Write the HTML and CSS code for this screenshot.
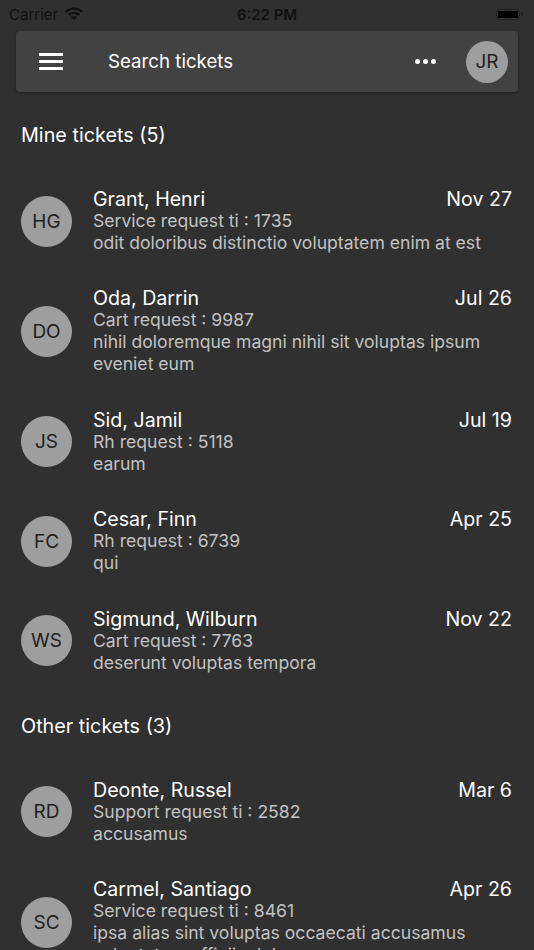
FILE: index.html
```html
<!DOCTYPE html>
<html lang="en">
<head>
  <meta charset="UTF-8" />
  <meta name="viewport" content="width=device-width, initial-scale=1" />
  <title>Tickets</title>
  <link rel="stylesheet" href="styles.css">
</head>
<body>

  <!-- iOS status bar -->
  <div class="status-bar">
    <div class="status-left">
      <span>Carrier</span>
      <svg class="wifi" width="20" height="14" viewBox="0 0 20 14">
        <path d="M10 13.5 L6.8 10.2 A4.6 4.6 0 0 1 13.2 10.2 Z" fill="#111"/>
        <path d="M4.6 8 A7.8 7.8 0 0 1 15.4 8" stroke="#111" stroke-width="2.2" fill="none"/>
        <path d="M1.6 5 A12 12 0 0 1 18.4 5" stroke="#111" stroke-width="2.2" fill="none"/>
      </svg>
    </div>
    <div class="status-time">6:22 PM</div>
    <div class="status-right">
      <div class="battery"><div class="battery-level"></div></div>
      <div class="battery-tip"></div>
    </div>
  </div>

  <!-- search bar -->
  <div class="search-bar">
    <div class="menu-icon">
      <span></span><span></span><span></span>
    </div>
    <div class="search-text">Search tickets</div>
    <div class="more-icon">
      <span></span><span></span><span></span>
    </div>
    <div class="avatar avatar-small">JR</div>
  </div>

  <h2 class="section-title">Mine tickets (5)</h2>
  <div class="ticket-list" id="mineList"></div>

  <h2 class="section-title">Other tickets (3)</h2>
  <div class="ticket-list" id="otherList"></div>

  <script>
    const mine = [
      { name: "Grant, Henri", initials: "HG", date: "Nov 27", subject: "Service request ti : 1735", body: "odit doloribus distinctio voluptatem enim at est" },
      { name: "Oda, Darrin", initials: "DO", date: "Jul 26", subject: "Cart request : 9987", body: "nihil doloremque magni nihil sit voluptas ipsum eveniet eum" },
      { name: "Sid, Jamil", initials: "JS", date: "Jul 19", subject: "Rh request : 5118", body: "earum" },
      { name: "Cesar, Finn", initials: "FC", date: "Apr 25", subject: "Rh request : 6739", body: "qui" },
      { name: "Sigmund, Wilburn", initials: "WS", date: "Nov 22", subject: "Cart request : 7763", body: "deserunt voluptas tempora" }
    ];

    const others = [
      { name: "Deonte, Russel", initials: "RD", date: "Mar 6", subject: "Support request ti : 2582", body: "accusamus" },
      { name: "Carmel, Santiago", initials: "SC", date: "Apr 26", subject: "Service request ti : 8461", body: "ipsa alias sint voluptas occaecati accusamus voluptatem officiis dolor" },
      { name: "Bret, Alvis", initials: "AB", date: "Feb 3", subject: "Cart request : 4410", body: "dolorem" }
    ];

    function renderTickets(listId, tickets) {
      const list = document.getElementById(listId);
      list.innerHTML = "";

      tickets.forEach(ticket => {
        list.innerHTML += `
          <div class="ticket">
            <div class="avatar">${ticket.initials}</div>
            <div class="ticket-info">
              <div class="ticket-head">
                <span class="ticket-name">${ticket.name}</span>
                <span class="ticket-date">${ticket.date}</span>
              </div>
              <div class="ticket-subject">${ticket.subject}</div>
              <div class="ticket-body">${ticket.body}</div>
            </div>
          </div>
        `;
      });
    }

    renderTickets("mineList", mine);
    renderTickets("otherList", others);
  </script>

</body>
</html>
```

FILE: styles.css
```css
body {
  margin: 0;
  background: #303030;
  font-family: Inter, 'Noto Sans', sans-serif;
  color: #fff;
  overflow: hidden;
}

/* Status bar */
.status-bar {
  height: 28px;
  display: flex;
  align-items: center;
  justify-content: space-between;
  padding: 0 11px 0 9px;
  color: #111;
  font-size: 15px;
  position: relative;
}

.status-left {
  display: flex;
  align-items: center;
  gap: 6px;
}

.status-time {
  position: absolute;
  left: 0;
  right: 0;
  text-align: center;
  font-weight: 600;
}

.status-right {
  display: flex;
  align-items: center;
  gap: 1px;
}

.battery {
  width: 24px;
  height: 11px;
  border: 1px solid #222;
  border-radius: 3px;
  padding: 1px;
  box-sizing: border-box;
}

.battery-level {
  height: 100%;
  background: #000;
  border-radius: 1px;
}

.battery-tip {
  width: 2px;
  height: 4px;
  background: #222;
  border-radius: 0 1px 1px 0;
}

/* Search bar */
.search-bar {
  margin: 3px 16px 7px;
  height: 61px;
  background: #424242;
  border-radius: 4px;
  box-shadow: 0 1px 3px rgba(0, 0, 0, 0.35);
  display: flex;
  align-items: center;
  padding: 0 10px 0 23px;
}

.menu-icon {
  width: 24px;
  display: flex;
  flex-direction: column;
  gap: 4px;
}

.menu-icon span {
  height: 3px;
  background: #fff;
  display: block;
}

.search-text {
  flex: 1;
  margin-left: 45px;
  font-size: 18.7px;
  color: #fff;
}

.more-icon {
  display: flex;
  gap: 3px;
  margin-right: 30px;
}

.more-icon span {
  width: 5px;
  height: 5px;
  border-radius: 50%;
  background: #fff;
  display: block;
}

/* Avatars */
.avatar {
  width: 51px;
  height: 51px;
  flex: none;
  border-radius: 50%;
  background: #9e9e9e;
  color: #212121;
  display: flex;
  align-items: center;
  justify-content: center;
  font-size: 19px;
}

.avatar-small {
  width: 42px;
  height: 42px;
  font-size: 19px;
}

/* Sections */
.section-title {
  margin: 0;
  padding: 24px 21px 24px;
  font-size: 19.8px;
  line-height: 24px;
  font-weight: 400;
}

.ticket {
  display: flex;
  align-items: center;
  padding: 17px 22px 16.4px 21px;
}

.ticket-info {
  flex: 1;
  margin-left: 21px;
  line-height: 22px;
}

.ticket-head {
  display: flex;
  justify-content: space-between;
  font-size: 19.6px;
  color: #fff;
}

.ticket-subject,
.ticket-body {
  font-size: 17.6px;
  color: #c2c2c2;
}
```
